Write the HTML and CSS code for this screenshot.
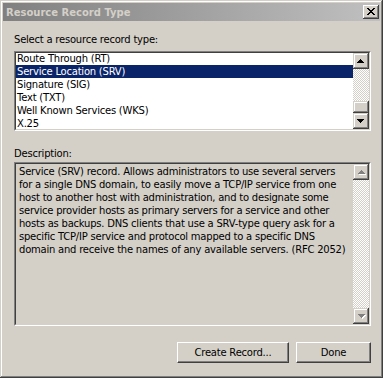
FILE: index.html
```html
<!DOCTYPE html>
<html>
<head>
<meta charset="utf-8">
<link rel="stylesheet" href="styles.css">
</head>
<body>
<div class="window">
  <div class="titlebar">
    <span class="title">Resource Record Type</span>
    <div class="close">
      <svg width="8" height="7" viewBox="0 0 8 7" shape-rendering="crispEdges"><path d="M0 0h2v1H0zM6 0h2v1H6zM1 1h2v1H1zM5 1h2v1H5zM2 2h4v1H2zM3 3h2v1H3zM2 4h4v1H2zM1 5h2v1H1zM5 5h2v1H5zM0 6h2v1H0zM6 6h2v1H6z" fill="#000"/></svg>
    </div>
  </div>
  <div class="content">
    <div class="label">Select a resource record type:</div>
    <div class="field list">
      <div class="field-inner">
        <ul class="items">
          <li>Route Through (RT)</li>
          <li class="selected">Service Location (SRV)</li>
          <li>Signature (SIG)</li>
          <li>Text (TXT)</li>
          <li>Well Known Services (WKS)</li>
          <li>X.25</li>
        </ul>
        <div class="scrollbar">
          <div class="sbtn"><svg width="7" height="4" viewBox="0 0 7 4" shape-rendering="crispEdges"><path d="M3 0h1v1H3zM2 1h3v1H2zM1 2h5v1H1zM0 3h7v1H0z" fill="#000"/></svg></div>
          <div class="track"></div>
          <div class="thumb"></div>
          <div class="sbtn"><svg width="7" height="4" viewBox="0 0 7 4" shape-rendering="crispEdges"><path d="M0 0h7v1H0zM1 1h5v1H1zM2 2h3v1H2zM3 3h1v1H3z" fill="#000"/></svg></div>
        </div>
      </div>
    </div>
    <div class="label desc-label">Description:</div>
    <div class="field desc">
      <div class="field-inner">
        <div class="desctext">Service (SRV) record. Allows administrators to use several servers<br>for a single DNS domain, to easily move a TCP/IP service from one<br>host to another host with administration, and to designate some<br>service provider hosts as primary servers for a service and other<br>hosts as backups. DNS clients that use a SRV-type query ask for a<br>specific TCP/IP service and protocol mapped to a specific DNS<br>domain and receive the names of any available servers. (RFC 2052)</div>
        <div class="scrollbar">
          <div class="sbtn"><svg width="8" height="5" viewBox="0 0 8 5" shape-rendering="crispEdges"><path d="M4 1h1v1H4zM3 2h3v1H3zM2 3h5v1H2zM1 4h7v1H1z" fill="#fff"/><path d="M3 0h1v1H3zM2 1h3v1H2zM1 2h5v1H1zM0 3h7v1H0z" fill="#808080"/></svg></div>
          <div class="track"></div>
          <div class="sbtn"><svg width="8" height="5" viewBox="0 0 8 5" shape-rendering="crispEdges"><path d="M1 1h7v1H1zM2 2h5v1H2zM3 3h3v1H3zM4 4h1v1H4z" fill="#fff"/><path d="M0 0h7v1H0zM1 1h5v1H1zM2 2h3v1H2zM3 3h1v1H3z" fill="#808080"/></svg></div>
        </div>
      </div>
    </div>
    <div class="buttons">
      <div class="btn create">Create Record...</div>
      <div class="btn done">Done</div>
    </div>
  </div>
</div>
</body>
</html>
```
FILE: styles.css
```css
html, body {
  margin: 0;
  padding: 0;
  background: #d4d0c8;
}
body {
  font-family: "DejaVu Sans", Verdana, sans-serif;
  font-size: 10px;
  letter-spacing: -0.22px;
  color: #000;
}
.window {
  width: 383px;
  height: 378px;
  box-sizing: border-box;
  padding: 3px;
  background: #d4d0c8;
  box-shadow: inset -1px -1px #404040, inset 1px 1px #d4d0c8, inset -2px -2px #808080, inset 2px 2px #fff;
}
.titlebar {
  height: 18px;
  background: linear-gradient(to right, #808080, #c0c0c0);
  display: flex;
  align-items: center;
  justify-content: space-between;
  padding: 0 1px 0 3px;
}
.title {
  font-weight: bold;
  font-size: 10px;
  letter-spacing: 0;
  color: #d4d0c8;
}
.close {
  width: 16px;
  height: 14px;
  box-sizing: border-box;
  background: #d4d0c8;
  box-shadow: inset -1px -1px #404040, inset 1px 1px #fff, inset -2px -2px #808080, inset 2px 2px #d4d0c8;
  display: flex;
  align-items: center;
  justify-content: center;
  padding: 0 1px 1px 0;
}
.close svg { display: block; }
.content {
  padding: 12px 9px 0 11px;
}
.label {
  line-height: 13px;
  height: 13px;
  margin-bottom: 5px;
}
.desc-label {
  margin-top: 16px;
  margin-bottom: 2px;
}
.field {
  box-sizing: border-box;
  border: 1px solid;
  border-color: #808080 #fff #fff #808080;
}
.field-inner {
  height: 100%;
  box-sizing: border-box;
  border: 1px solid;
  border-color: #404040 #d4d0c8 #d4d0c8 #404040;
  display: flex;
}
.list { height: 80px; }
.list .field-inner { background: #fff; }
.desc { height: 164px; }
.desc .field-inner { background: #d4d0c8; }
.items {
  list-style: none;
  margin: 0;
  padding: 0;
  flex: 1;
  overflow: hidden;
}
.items li {
  height: 13px;
  line-height: 13px;
  padding-left: 1px;
  white-space: nowrap;
}
.items li:first-child { margin-top: -1px; }
.items li.selected {
  background: #0a246a;
  color: #fff;
}
.scrollbar {
  width: 16px;
  display: flex;
  flex-direction: column;
}
.sbtn {
  width: 16px;
  height: 16px;
  flex: none;
  box-sizing: border-box;
  background: #d4d0c8;
  box-shadow: inset -1px -1px #404040, inset 1px 1px #d4d0c8, inset -2px -2px #808080, inset 2px 2px #fff;
  display: flex;
  align-items: center;
  justify-content: center;
  padding: 0 1px 1px 0;
}
.sbtn svg { display: block; }
.desc .sbtn { padding: 1px 0 0 1px; }
.track {
  flex: 1;
  background-image: conic-gradient(#fff 25%, #d4d0c8 0 50%, #fff 0 75%, #d4d0c8 0);
  background-size: 2px 2px;
}
.thumb {
  width: 16px;
  height: 12px;
  flex: none;
  box-sizing: border-box;
  background: #d4d0c8;
  box-shadow: inset -1px -1px #404040, inset 1px 1px #d4d0c8, inset -2px -2px #808080, inset 2px 2px #fff;
}
.desctext {
  flex: 1;
  padding: 1px 0 0 3px;
  line-height: 13px;
  white-space: nowrap;
  overflow: hidden;
}
.buttons {
  margin-top: 16px;
  display: flex;
  justify-content: flex-end;
  gap: 7px;
}
.btn {
  height: 21px;
  box-sizing: border-box;
  border: 1px solid;
  border-color: #fff #404040 #404040 #fff;
  box-shadow: inset -1px -1px #808080;
  background: #d4d0c8;
  display: flex;
  align-items: center;
  justify-content: center;
  line-height: 13px;
}
.create { width: 112px; }
.done { width: 75px; }
```
